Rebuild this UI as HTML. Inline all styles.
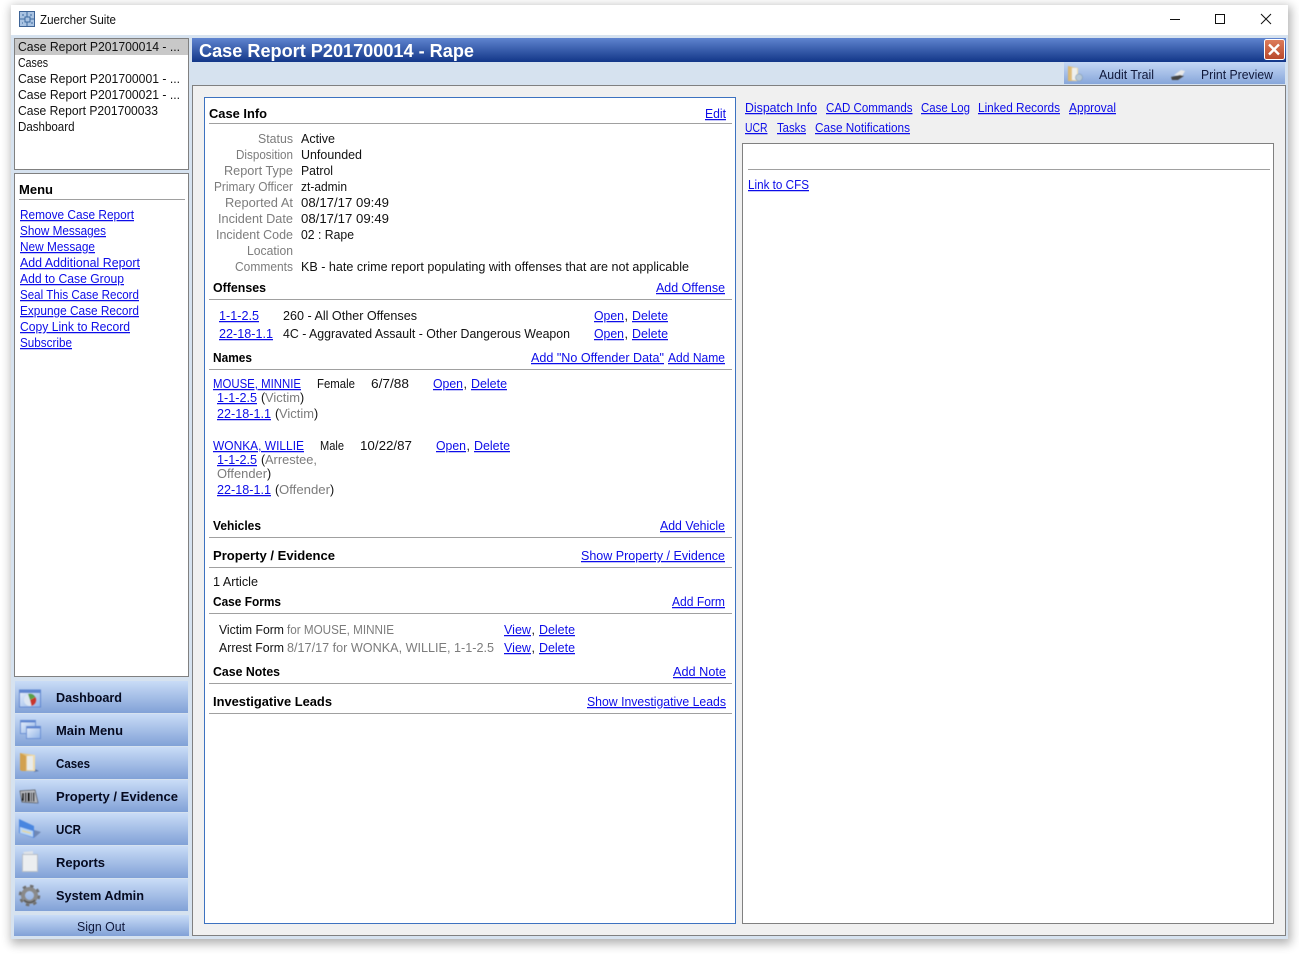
<!DOCTYPE html>
<html><head><meta charset="utf-8"><title>Zuercher Suite</title>
<style>
html,body{margin:0;padding:0;background:#fff;width:1299px;height:955px;overflow:hidden}
svg{position:absolute;left:0;top:0;display:block}
text{font-family:"Liberation Sans",sans-serif;font-size:12.5px;fill:#111}
.b{font-weight:bold;font-size:13px;fill:#000}
.g{fill:#7c7c7c}
.l{fill:#0d0de8;text-decoration:underline}
.n{font-weight:bold;font-size:13px;fill:#050a20}
.d{fill:#10183a}
</style></head><body>
<svg width="1299" height="955" viewBox="0 0 1299 955" xmlns="http://www.w3.org/2000/svg">
<defs>
<linearGradient id="tb" x1="0" y1="0" x2="0" y2="1"><stop offset="0" stop-color="#5f84cf"/><stop offset="1" stop-color="#123688"/></linearGradient>
<linearGradient id="tool" x1="0" y1="0" x2="0" y2="1"><stop offset="0" stop-color="#c5d8f5"/><stop offset="1" stop-color="#87a6da"/></linearGradient>
<linearGradient id="btn" x1="0" y1="0" x2="0" y2="1"><stop offset="0" stop-color="#c9dcf7"/><stop offset="1" stop-color="#81a1d7"/></linearGradient>
<linearGradient id="cl" x1="0" y1="0" x2="0" y2="1"><stop offset="0" stop-color="#dd7d5c"/><stop offset="1" stop-color="#b8472a"/></linearGradient>
<linearGradient id="fo" x1="0" y1="0" x2="1" y2="0"><stop offset="0" stop-color="#d9b36a"/><stop offset="1" stop-color="#f2dfae"/></linearGradient>
<linearGradient id="wi" x1="0" y1="0" x2="1" y2="1"><stop offset="0" stop-color="#e9f1fc"/><stop offset="1" stop-color="#8fb2e6"/></linearGradient>
<filter id="sh" x="-5%" y="-5%" width="110%" height="110%"><feGaussianBlur stdDeviation="5"/></filter>
<filter id="s1"><feGaussianBlur stdDeviation=".45"/></filter>
</defs>

<rect x="11" y="6" width="1280" height="938" fill="#000" opacity=".3" filter="url(#sh)"/>
<rect x="11" y="5" width="1277" height="30" fill="#fff"/>
<rect x="11" y="35" width="1277" height="904" fill="#d6e2ef"/>

<!-- app icon -->
<g transform="translate(19,11)"><rect x=".5" y=".5" width="15" height="15" fill="#a9c3e2" stroke="#3d6396"/><path d="M1 8h5v-2h2v-5M8 6h3v2h4M8 15v-4h-2v-3M11 8v3H8M3 4h2M11 4h2M3 12h1M12 12h2" fill="none" stroke="#3d6a9f" stroke-width="1"/></g>
<text x="40" y="24" textLength="76" lengthAdjust="spacingAndGlyphs">Zuercher Suite</text>
<path d="M1170 19.500h10" stroke="#111" stroke-width="1"/>
<rect x="1215.500" y="14.500" width="9" height="9" fill="none" stroke="#111"/>
<path d="M1261 14l10 10M1271 14l-10 10" stroke="#111" stroke-width="1"/>

<!-- sidebar list -->
<rect x="14.500" y="38.500" width="174" height="131" fill="#fff" stroke="#808080"/>
<rect x="15" y="39" width="173" height="16" fill="#c8c8c8"/>
<text x="18" y="51" textLength="162" lengthAdjust="spacingAndGlyphs">Case Report P201700014 - ...</text>
<text x="18" y="67" textLength="30" lengthAdjust="spacingAndGlyphs">Cases</text>
<text x="18" y="83" textLength="162" lengthAdjust="spacingAndGlyphs">Case Report P201700001 - ...</text>
<text x="18" y="99" textLength="162" lengthAdjust="spacingAndGlyphs">Case Report P201700021 - ...</text>
<text x="18" y="115" textLength="140" lengthAdjust="spacingAndGlyphs">Case Report P201700033</text>
<text x="18" y="131" textLength="56.500" lengthAdjust="spacingAndGlyphs">Dashboard</text>

<!-- menu -->
<rect x="14.500" y="173.500" width="174" height="503" fill="#fff" stroke="#808080"/>
<text class="b" x="19" y="194" textLength="34" lengthAdjust="spacingAndGlyphs">Menu</text>
<rect x="19" y="199" width="166" height="1" fill="#a0a0a0"/>
<text class="l" x="20" y="219" textLength="114" lengthAdjust="spacingAndGlyphs">Remove Case Report</text>
<text class="l" x="20" y="235" textLength="86" lengthAdjust="spacingAndGlyphs">Show Messages</text>
<text class="l" x="20" y="251" textLength="75" lengthAdjust="spacingAndGlyphs">New Message</text>
<text class="l" x="20" y="267" textLength="120" lengthAdjust="spacingAndGlyphs">Add Additional Report</text>
<text class="l" x="20" y="283" textLength="104" lengthAdjust="spacingAndGlyphs">Add to Case Group</text>
<text class="l" x="20" y="299" textLength="119" lengthAdjust="spacingAndGlyphs">Seal This Case Record</text>
<text class="l" x="20" y="315" textLength="119" lengthAdjust="spacingAndGlyphs">Expunge Case Record</text>
<text class="l" x="20" y="331" textLength="110" lengthAdjust="spacingAndGlyphs">Copy Link to Record</text>
<text class="l" x="20" y="347" textLength="52" lengthAdjust="spacingAndGlyphs">Subscribe</text>

<!-- nav buttons -->
<rect x="15" y="681" width="173" height="32" fill="url(#btn)"/>
<rect x="15" y="714" width="173" height="32" fill="url(#btn)"/>
<rect x="15" y="747" width="173" height="32" fill="url(#btn)"/>
<rect x="15" y="780" width="173" height="32" fill="url(#btn)"/>
<rect x="15" y="813" width="173" height="32" fill="url(#btn)"/>
<rect x="15" y="846" width="173" height="32" fill="url(#btn)"/>
<rect x="15" y="879" width="173" height="32" fill="url(#btn)"/>
<rect x="14" y="915" width="175" height="21" fill="url(#btn)"/>

<!-- Dashboard icon -->
<g filter="url(#s1)"><rect x="19.500" y="690" width="21" height="17" fill="url(#wi)" stroke="#5f86d0"/><rect x="20" y="690" width="20" height="3" fill="#5f86d0"/><circle cx="30" cy="700" r="6" fill="#dde6f2"/><path d="M30 700l5.500-3a6 6 0 0 1-4 9z" fill="#c8342a"/><path d="M30 700l-2-6a6 6 0 0 1 7.500 3z" fill="#58a048"/></g>
<!-- Main menu icon -->
<g filter="url(#s1)"><rect x="20.500" y="720.500" width="15" height="13" fill="url(#wi)" stroke="#6a90d4"/><rect x="21" y="720" width="14" height="2.500" fill="#5f86d0"/><rect x="26.500" y="726.500" width="14" height="12" fill="url(#wi)" stroke="#6a90d4"/><rect x="27" y="726" width="13" height="2.500" fill="#5f86d0"/></g>
<!-- Cases icon -->
<g filter="url(#s1)"><path d="M33 768l6 3-5 1z" fill="#5f78a5"/><path d="M20 753l15 2v16H22l-2-1z" fill="url(#fo)"/><path d="M20 753l6 3v15h-4l-2-1z" fill="#d2a14f"/><path d="M27 756h6v14h-6z" fill="#e8ebea"/></g>
<!-- Property icon -->
<g filter="url(#s1)"><path d="M20 791l15-1 3 13-16-1z" fill="#b9bcc2" stroke="#444" stroke-width=".7"/><path d="M22 793h2v8h-2zM25 792.500h1.500v9H25zM27.500 792.500h2.500v9h-2.500zM31 792.500h1v9h-1zM33 792.500h1.500v9H33z" fill="#111"/><path d="M36 803l3-1-1 2z" fill="#6b82ad"/></g>
<!-- UCR icon -->
<g filter="url(#s1)"><path d="M34 830l7 2-7 6z" fill="#6f88b5"/><path d="M19 819l15 7v12l-15-5z" fill="#4a86e0"/><path d="M20 827l13 4v6l-13-4z" fill="#b9d6f5"/><path d="M22 830l9 2.500v1.500l-9-2.500z" fill="#e5d89a"/></g>
<!-- Reports icon -->
<g filter="url(#s1)"><path d="M23 852l10-1v4h-8z" fill="#dfe3e8"/><rect x="22.500" y="854.500" width="15" height="17" fill="#eceef0" stroke="#b8bec8"/></g>
<!-- Admin icon -->
<g filter="url(#s1)"><circle cx="29.500" cy="895.500" r="6.500" fill="none" stroke="#8a8a8a" stroke-width="4"/><circle cx="29.500" cy="895.500" r="9.500" fill="none" stroke="#707070" stroke-width="2.500" stroke-dasharray="3.500 4"/><path d="M24 900a7.500 7.500 0 0 0 11 0" fill="none" stroke="#555" stroke-width="1.500"/></g>

<text class="n" x="56" y="702" textLength="66" lengthAdjust="spacingAndGlyphs">Dashboard</text>
<text class="n" x="56" y="735" textLength="67" lengthAdjust="spacingAndGlyphs">Main Menu</text>
<text class="n" x="56" y="768" textLength="34" lengthAdjust="spacingAndGlyphs">Cases</text>
<text class="n" x="56" y="801" textLength="122" lengthAdjust="spacingAndGlyphs">Property / Evidence</text>
<text class="n" x="56" y="834" textLength="25" lengthAdjust="spacingAndGlyphs">UCR</text>
<text class="n" x="56" y="867" textLength="49" lengthAdjust="spacingAndGlyphs">Reports</text>
<text class="n" x="56" y="900" textLength="88" lengthAdjust="spacingAndGlyphs">System Admin</text>
<text class="d" x="77" y="931" textLength="48" lengthAdjust="spacingAndGlyphs">Sign Out</text>

<!-- title bar -->
<rect x="192" y="38" width="1094" height="24" fill="url(#tb)"/>
<text x="199" y="57" textLength="275" lengthAdjust="spacingAndGlyphs" style="font-size:18px;font-weight:bold;fill:#fff">Case Report P201700014 - Rape</text>
<rect x="1264.500" y="39.500" width="20" height="20" rx="2" fill="url(#cl)" stroke="#fff"/>
<path d="M1269 44.500l10 10M1279 44.500l-10 10" stroke="#fff" stroke-width="2.400"/>

<!-- toolbar -->
<rect x="1064" y="62" width="221" height="22" fill="url(#tool)"/>
<g filter="url(#s1)"><path d="M1068 66l10 2v13h-10z" fill="url(#fo)"/><path d="M1072 68h5v12h-5z" fill="#eef0ee"/><circle cx="1079" cy="77.500" r="3.500" fill="#b7c9d8" stroke="#7f97ad" stroke-width=".6"/></g>
<text class="d" x="1099" y="79" textLength="55" lengthAdjust="spacingAndGlyphs">Audit Trail</text>
<g filter="url(#s1)"><path d="M1174 75l7-5 4 1-3 5z" fill="#e8e8e8"/><path d="M1171 77l9-2 4 1-6 4h-6z" fill="#444"/></g>
<text class="d" x="1201" y="79" textLength="72" lengthAdjust="spacingAndGlyphs">Print Preview</text>

<!-- main panel -->
<rect x="192.500" y="85.500" width="1093" height="850" fill="#f0f0f0" stroke="#808080"/>
<rect x="204.500" y="97.500" width="531" height="826" fill="#fff" stroke="#3d72c0"/>
<rect x="742.500" y="143.500" width="531" height="780" fill="#fff" stroke="#808080"/>
<rect x="748" y="169" width="522" height="1" fill="#a0a0a0"/>

<!-- right links -->
<text class="l" x="745" y="112" textLength="72" lengthAdjust="spacingAndGlyphs">Dispatch Info</text>
<text class="l" x="826" y="112" textLength="86.500" lengthAdjust="spacingAndGlyphs">CAD Commands</text>
<text class="l" x="921" y="112" textLength="49" lengthAdjust="spacingAndGlyphs">Case Log</text>
<text class="l" x="978" y="112" textLength="82" lengthAdjust="spacingAndGlyphs">Linked Records</text>
<text class="l" x="1069" y="112" textLength="47" lengthAdjust="spacingAndGlyphs">Approval</text>
<text class="l" x="745" y="132" textLength="22.500" lengthAdjust="spacingAndGlyphs">UCR</text>
<text class="l" x="777" y="132" textLength="29" lengthAdjust="spacingAndGlyphs">Tasks</text>
<text class="l" x="815" y="132" textLength="95" lengthAdjust="spacingAndGlyphs">Case Notifications</text>
<text class="l" x="748" y="189" textLength="61" lengthAdjust="spacingAndGlyphs">Link to CFS</text>

<!-- Case info -->
<text class="b" x="209" y="118" textLength="58" lengthAdjust="spacingAndGlyphs">Case Info</text>
<text class="l" x="705" y="118" textLength="21" lengthAdjust="spacingAndGlyphs">Edit</text>
<rect x="209" y="123" width="523" height="1" fill="#a0a0a0"/>

<text class="g" x="258" y="143" textLength="35" lengthAdjust="spacingAndGlyphs">Status</text>
<text class="g" x="236" y="159" textLength="57" lengthAdjust="spacingAndGlyphs">Disposition</text>
<text class="g" x="224" y="175" textLength="69" lengthAdjust="spacingAndGlyphs">Report Type</text>
<text class="g" x="214" y="191" textLength="79" lengthAdjust="spacingAndGlyphs">Primary Officer</text>
<text class="g" x="225" y="207" textLength="68" lengthAdjust="spacingAndGlyphs">Reported At</text>
<text class="g" x="218" y="223" textLength="75" lengthAdjust="spacingAndGlyphs">Incident Date</text>
<text class="g" x="216" y="239" textLength="77" lengthAdjust="spacingAndGlyphs">Incident Code</text>
<text class="g" x="247" y="255" textLength="46" lengthAdjust="spacingAndGlyphs">Location</text>
<text class="g" x="235" y="271" textLength="58" lengthAdjust="spacingAndGlyphs">Comments</text>

<text x="301" y="143" textLength="34" lengthAdjust="spacingAndGlyphs">Active</text>
<text x="301" y="159" textLength="61" lengthAdjust="spacingAndGlyphs">Unfounded</text>
<text x="301" y="175" textLength="32" lengthAdjust="spacingAndGlyphs">Patrol</text>
<text x="301" y="191" textLength="46" lengthAdjust="spacingAndGlyphs">zt-admin</text>
<text x="301" y="207" textLength="88" lengthAdjust="spacingAndGlyphs">08/17/17 09:49</text>
<text x="301" y="223" textLength="88" lengthAdjust="spacingAndGlyphs">08/17/17 09:49</text>
<text x="301" y="239" textLength="53" lengthAdjust="spacingAndGlyphs">02 : Rape</text>
<text x="301" y="271" textLength="388" lengthAdjust="spacingAndGlyphs">KB - hate crime report populating with offenses that are not applicable</text>

<text class="b" x="213" y="292" textLength="53" lengthAdjust="spacingAndGlyphs">Offenses</text>
<text class="l" x="656" y="292" textLength="69" lengthAdjust="spacingAndGlyphs">Add Offense</text>
<rect x="209" y="299" width="523" height="1" fill="#a0a0a0"/>

<text class="l" x="219" y="320" textLength="40" lengthAdjust="spacingAndGlyphs">1-1-2.5</text>
<text x="283" y="320" textLength="134" lengthAdjust="spacingAndGlyphs">260 - All Other Offenses</text>
<text class="l" x="594" y="320" textLength="30" lengthAdjust="spacingAndGlyphs">Open</text><text x="624.500" y="320">,</text>
<text class="l" x="632" y="320" textLength="36" lengthAdjust="spacingAndGlyphs">Delete</text>
<text class="l" x="219" y="338" textLength="54" lengthAdjust="spacingAndGlyphs">22-18-1.1</text>
<text x="283" y="338" textLength="287" lengthAdjust="spacingAndGlyphs">4C - Aggravated Assault - Other Dangerous Weapon</text>
<text class="l" x="594" y="338" textLength="30" lengthAdjust="spacingAndGlyphs">Open</text><text x="624.500" y="338">,</text>
<text class="l" x="632" y="338" textLength="36" lengthAdjust="spacingAndGlyphs">Delete</text>

<text class="b" x="213" y="362" textLength="39" lengthAdjust="spacingAndGlyphs">Names</text>
<text class="l" x="531" y="362" textLength="133" lengthAdjust="spacingAndGlyphs">Add "No Offender Data"</text>
<text class="l" x="668" y="362" textLength="57" lengthAdjust="spacingAndGlyphs">Add Name</text>
<rect x="209" y="369" width="523" height="1" fill="#a0a0a0"/>

<text class="l" x="213" y="388" textLength="88" lengthAdjust="spacingAndGlyphs">MOUSE, MINNIE</text>
<text x="317" y="388" textLength="38" lengthAdjust="spacingAndGlyphs">Female</text>
<text x="371" y="388" textLength="38" lengthAdjust="spacingAndGlyphs">6/7/88</text>
<text class="l" x="433" y="388" textLength="30" lengthAdjust="spacingAndGlyphs">Open</text><text x="463.500" y="388">,</text>
<text class="l" x="471" y="388" textLength="36" lengthAdjust="spacingAndGlyphs">Delete</text>
<text class="l" x="217" y="402" textLength="40" lengthAdjust="spacingAndGlyphs">1-1-2.5</text>
<text x="261" y="402">(</text><text class="g" x="265" y="402" textLength="35" lengthAdjust="spacingAndGlyphs">Victim</text><text x="300" y="402">)</text>
<text class="l" x="217" y="418" textLength="54" lengthAdjust="spacingAndGlyphs">22-18-1.1</text>
<text x="275" y="418">(</text><text class="g" x="279" y="418" textLength="35" lengthAdjust="spacingAndGlyphs">Victim</text><text x="314" y="418">)</text>

<text class="l" x="213" y="450" textLength="91" lengthAdjust="spacingAndGlyphs">WONKA, WILLIE</text>
<text x="320" y="450" textLength="24" lengthAdjust="spacingAndGlyphs">Male</text>
<text x="360" y="450" textLength="52" lengthAdjust="spacingAndGlyphs">10/22/87</text>
<text class="l" x="436" y="450" textLength="30" lengthAdjust="spacingAndGlyphs">Open</text><text x="466.500" y="450">,</text>
<text class="l" x="474" y="450" textLength="36" lengthAdjust="spacingAndGlyphs">Delete</text>
<text class="l" x="217" y="464" textLength="40" lengthAdjust="spacingAndGlyphs">1-1-2.5</text>
<text x="261" y="464">(</text><text class="g" x="265" y="464" textLength="52" lengthAdjust="spacingAndGlyphs">Arrestee,</text>
<text class="g" x="217" y="478" textLength="50" lengthAdjust="spacingAndGlyphs">Offender</text><text x="267" y="478">)</text>
<text class="l" x="217" y="494" textLength="54" lengthAdjust="spacingAndGlyphs">22-18-1.1</text>
<text x="275" y="494">(</text><text class="g" x="279" y="494" textLength="51" lengthAdjust="spacingAndGlyphs">Offender</text><text x="330" y="494">)</text>

<text class="b" x="213" y="530" textLength="48" lengthAdjust="spacingAndGlyphs">Vehicles</text>
<text class="l" x="660" y="530" textLength="65" lengthAdjust="spacingAndGlyphs">Add Vehicle</text>
<rect x="209" y="537" width="523" height="1" fill="#a0a0a0"/>

<text class="b" x="213" y="560" textLength="122" lengthAdjust="spacingAndGlyphs">Property / Evidence</text>
<text class="l" x="581" y="560" textLength="144" lengthAdjust="spacingAndGlyphs">Show Property / Evidence</text>
<rect x="209" y="567" width="523" height="1" fill="#a0a0a0"/>

<text x="213" y="586" textLength="45" lengthAdjust="spacingAndGlyphs">1 Article</text>

<text class="b" x="213" y="606" textLength="68" lengthAdjust="spacingAndGlyphs">Case Forms</text>
<text class="l" x="672" y="606" textLength="53" lengthAdjust="spacingAndGlyphs">Add Form</text>
<rect x="209" y="613" width="523" height="1" fill="#a0a0a0"/>

<text x="219" y="634" textLength="65" lengthAdjust="spacingAndGlyphs">Victim Form</text>
<text class="g" x="287" y="634" textLength="107" lengthAdjust="spacingAndGlyphs">for MOUSE, MINNIE</text>
<text class="l" x="504" y="634" textLength="27" lengthAdjust="spacingAndGlyphs">View</text><text x="531.500" y="634">,</text>
<text class="l" x="539" y="634" textLength="36" lengthAdjust="spacingAndGlyphs">Delete</text>
<text x="219" y="652" textLength="65" lengthAdjust="spacingAndGlyphs">Arrest Form</text>
<text class="g" x="287" y="652" textLength="207" lengthAdjust="spacingAndGlyphs">8/17/17 for WONKA, WILLIE, 1-1-2.5</text>
<text class="l" x="504" y="652" textLength="27" lengthAdjust="spacingAndGlyphs">View</text><text x="531.500" y="652">,</text>
<text class="l" x="539" y="652" textLength="36" lengthAdjust="spacingAndGlyphs">Delete</text>

<text class="b" x="213" y="676" textLength="67" lengthAdjust="spacingAndGlyphs">Case Notes</text>
<text class="l" x="673" y="676" textLength="53" lengthAdjust="spacingAndGlyphs">Add Note</text>
<rect x="209" y="683" width="523" height="1" fill="#a0a0a0"/>

<text class="b" x="213" y="706" textLength="119" lengthAdjust="spacingAndGlyphs">Investigative Leads</text>
<text class="l" x="587" y="706" textLength="139" lengthAdjust="spacingAndGlyphs">Show Investigative Leads</text>
<rect x="209" y="713" width="523" height="1" fill="#a0a0a0"/>
</svg>
</body></html>
